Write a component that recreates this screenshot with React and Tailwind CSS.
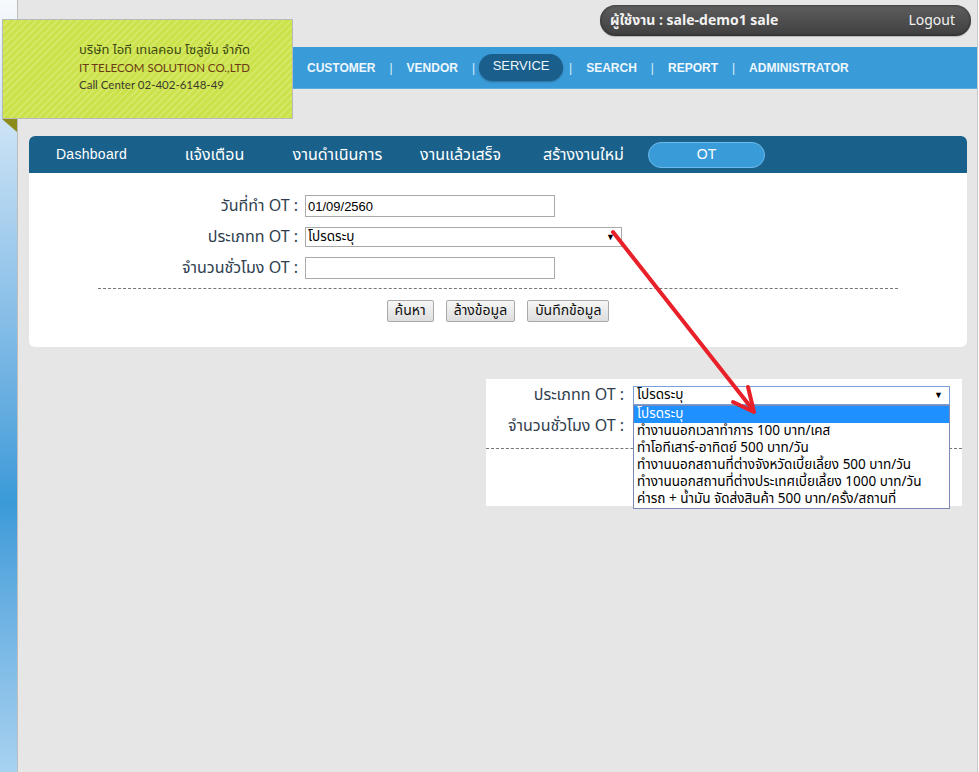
import React from 'react';

const thai = "font-['Tahoma','Noto_Sans_Thai','Liberation_Sans',sans-serif]";

const navItems = ['CUSTOMER', 'VENDOR', 'SERVICE', 'SEARCH', 'REPORT', 'ADMINISTRATOR'];
const tabs = ['Dashboard', 'แจ้งเตือน', 'งานดำเนินการ', 'งานแล้วเสร็จ', 'สร้างงานใหม่', 'OT'];
const otTypes = [
  'โปรดระบุ',
  'ทำงานนอกเวลาทำการ 100 บาท/เคส',
  'ทำโอทีเสาร์-อาทิตย์ 500 บาท/วัน',
  'ทำงานนอกสถานที่ต่างจังหวัดเบี้ยเลี้ยง 500 บาท/วัน',
  'ทำงานนอกสถานที่ต่างประเทศเบี้ยเลี้ยง 1000 บาท/วัน',
  'ค่ารถ + น้ำมัน จัดส่งสินค้า 500 บาท/ครั้ง/สถานที่',
];

const Logo = () => (
  <div className="absolute left-[2px] top-[19px]">
    <div className="w-[291px] h-[100px] border border-[#b9b9b9] bg-[repeating-linear-gradient(135deg,#cce24b_0px,#cce24b_3px,#d5e866_3px,#d5e866_5px)] pl-[76px] pt-[22px] font-['Lato','Open_Sans',sans-serif] text-[11.5px] leading-[17px]">
      <p className={`${thai} text-[13px] text-[#3c4a12]`}>บริษัท ไอที เทเลคอม โซลูชั่น จำกัด</p>
      <p className="text-[#6a3b12]">IT TELECOM SOLUTION CO.,LTD</p>
      <p className="text-[#3b3b2c]">Call Center 02-402-6148-49</p>
    </div>
    <div className="w-[15px] h-[13px] bg-[#8e8b1d] [clip-path:polygon(0_0,100%_0,100%_100%)]" />
  </div>
);

const TopNav = () => (
  <div className="h-[42px] bg-[#3a9bd9] border-b border-[#5aaee2] flex items-center pl-[289px] font-['Liberation_Sans',Arial,sans-serif] text-[12px] font-bold text-[#eef7fc]">
    {navItems.map((item, i) => {
      const active = item === 'SERVICE';
      const nextActive = navItems[i + 1] === 'SERVICE';
      return (
        <React.Fragment key={item}>
          {active ? (
            <span className="w-[84px] h-[27px] rounded-full bg-[#1a5f8b] flex items-center justify-center pb-[4px] font-normal text-[13px] shadow-[0_1px_2px_rgba(0,0,0,0.3)]">
              {item}
            </span>
          ) : (
            <span>{item}</span>
          )}
          {i < navItems.length - 1 && (
            <span className={`font-normal text-[#dceffa] ${active ? 'ml-[6px] mr-[14px]' : nextActive ? 'ml-[14px] mr-[4px]' : 'mx-[14px]'}`}>|</span>
          )}
        </React.Fragment>
      );
    })}
  </div>
);

const Field = ({ label, children }) => (
  <div className="flex items-center h-[22px]">
    <label className={`${thai} w-[276px] text-right pr-[7px] text-[16px] leading-[20px] text-[#2f3e4e]`}>{label}</label>
    {children}
  </div>
);

const Button = ({ children }) => (
  <button className={`${thai} h-[22px] px-[7px] border border-[#a9a9a9] rounded-[2px] bg-gradient-to-b from-[#f6f6f6] to-[#dedede] text-[14px] leading-[18px] text-[#111]`}>
    {children}
  </button>
);

const Panel = () => (
  <div className="ml-[11px] w-[938px] mt-[47px] rounded-[6px] bg-white overflow-hidden">
    <div className={`${thai} h-[37px] bg-[#19608a] flex items-center pl-[1px] text-[16px] text-white`}>
      {tabs.map((t) => (
        <div key={t} className="w-[123px] flex justify-center">
          {t === 'OT' ? (
            <span className="w-[117px] h-[26px] rounded-full bg-[#3a9bd9] border border-[#6cbaec] flex items-center justify-center text-[14px] font-['Liberation_Sans',Arial,sans-serif]">
              OT
            </span>
          ) : (
            <span className={t === 'Dashboard' ? "text-[14px] font-['Liberation_Sans',Arial,sans-serif] tracking-[0.3px]" : ''}>{t}</span>
          )}
        </div>
      ))}
    </div>
    <div className="pt-[22px] pb-[25px] flex flex-col gap-[9px]">
      <Field label="วันที่ทำ OT :">
        <input
          readOnly
          value="01/09/2560"
          className="w-[250px] h-[22px] border border-[#a9a9a9] px-[2px] text-[13px] text-black font-['Liberation_Sans',Arial,sans-serif] outline-none"
        />
      </Field>
      <Field label="ประเภทท OT :">
        <div className={`${thai} relative w-[317px] h-[20px] border border-[#a9a9a9] px-[2px] text-[13.5px] leading-[18px] text-black`}>
          โปรดระบุ
          <span className="absolute right-[6px] top-0 text-[9px] text-black">▼</span>
        </div>
      </Field>
      <Field label="จำนวนชั่วโมง OT :">
        <input readOnly className="w-[250px] h-[22px] border border-[#a9a9a9] outline-none" />
      </Field>
      <div className="mx-[69px] border-t border-dashed border-[#777]" />
      <div className="flex justify-center gap-[12px] mt-[2px]">
        <Button>ค้นหา</Button>
        <Button>ล้างข้อมูล</Button>
        <Button>บันทึกข้อมูล</Button>
      </div>
    </div>
  </div>
);

const Inset = () => (
  <div className="ml-[468px] mt-[32px] w-[476px] h-[127px] bg-white relative">
    <div className="pt-[7px] flex flex-col gap-[11px]">
      <div className="flex items-center h-[19px]">
        <span className={`${thai} w-[138px] text-right text-[16px] leading-[19px] text-[#2f3e4e]`}>ประเภทท OT :</span>
        <div className={`${thai} ml-[9px] relative w-[317px] h-[19px] border border-[#7a9fd6] px-[3px] text-[13.5px] leading-[17px] text-black`}>
          โปรดระบุ
          <span className="absolute right-[6px] top-0 text-[9px]">▼</span>
        </div>
      </div>
      <div className="flex items-center h-[20px]">
        <span className={`${thai} w-[138px] text-right text-[16px] leading-[20px] text-[#2f3e4e]`}>จำนวนชั่วโมง OT :</span>
      </div>
      <div className="mt-[1px] border-t border-dashed border-[#777]" />
    </div>
    <ul className={`${thai} absolute left-[147px] top-[26px] w-[317px] border border-[#7b89b4] bg-white text-[13.5px] text-black`}>
      {otTypes.map((t, i) => (
        <li key={t} className={`h-[17px] leading-[17px] px-[3px] whitespace-nowrap ${i === 0 ? 'bg-[#1e90ff] text-white' : ''}`}>
          {t}
        </li>
      ))}
    </ul>
  </div>
);

export default function App() {
  return (
    <div className="relative w-[979px] h-[772px] overflow-hidden bg-white flex">
      <aside className="w-[18px] shrink-0 border-r border-[#bdbdbd] bg-gradient-to-b from-[#f7fafd] via-[#3a9ad8] via-65% to-[#a8d2f0]" />
      <main className="w-[960px] h-full bg-[#e6e6e6] border-r border-[#c9c9c9]">
        <div className="flex justify-end pt-[5px] pr-[6px]">
          <div className={`${thai} w-[371px] h-[31px] rounded-full bg-gradient-to-b from-[#5e5e5e] to-[#3f3f3f] shadow-[inset_0_0_3px_rgba(0,0,0,0.6),0_1px_1px_rgba(0,0,0,0.2)] flex items-center justify-between pl-[10px] pr-[16px] text-[14px] text-[#f2f2f2]`}>
            <span className="font-bold">ผู้ใช้งาน : sale-demo1 sale</span>
            <span>Logout</span>
          </div>
        </div>
        <div className="mt-[11px]">
          <TopNav />
        </div>
        <Panel />
        <Inset />
      </main>
      <Logo />
      <svg className="absolute left-0 top-0 pointer-events-none" width="979" height="772">
        <g stroke="#e8202a" strokeWidth="4" strokeLinecap="round" strokeLinejoin="round" fill="none">
          <path d="M613 232 L753 410" />
          <path d="M733 402 L754 412 L748 387" />
        </g>
      </svg>
    </div>
  );
}
